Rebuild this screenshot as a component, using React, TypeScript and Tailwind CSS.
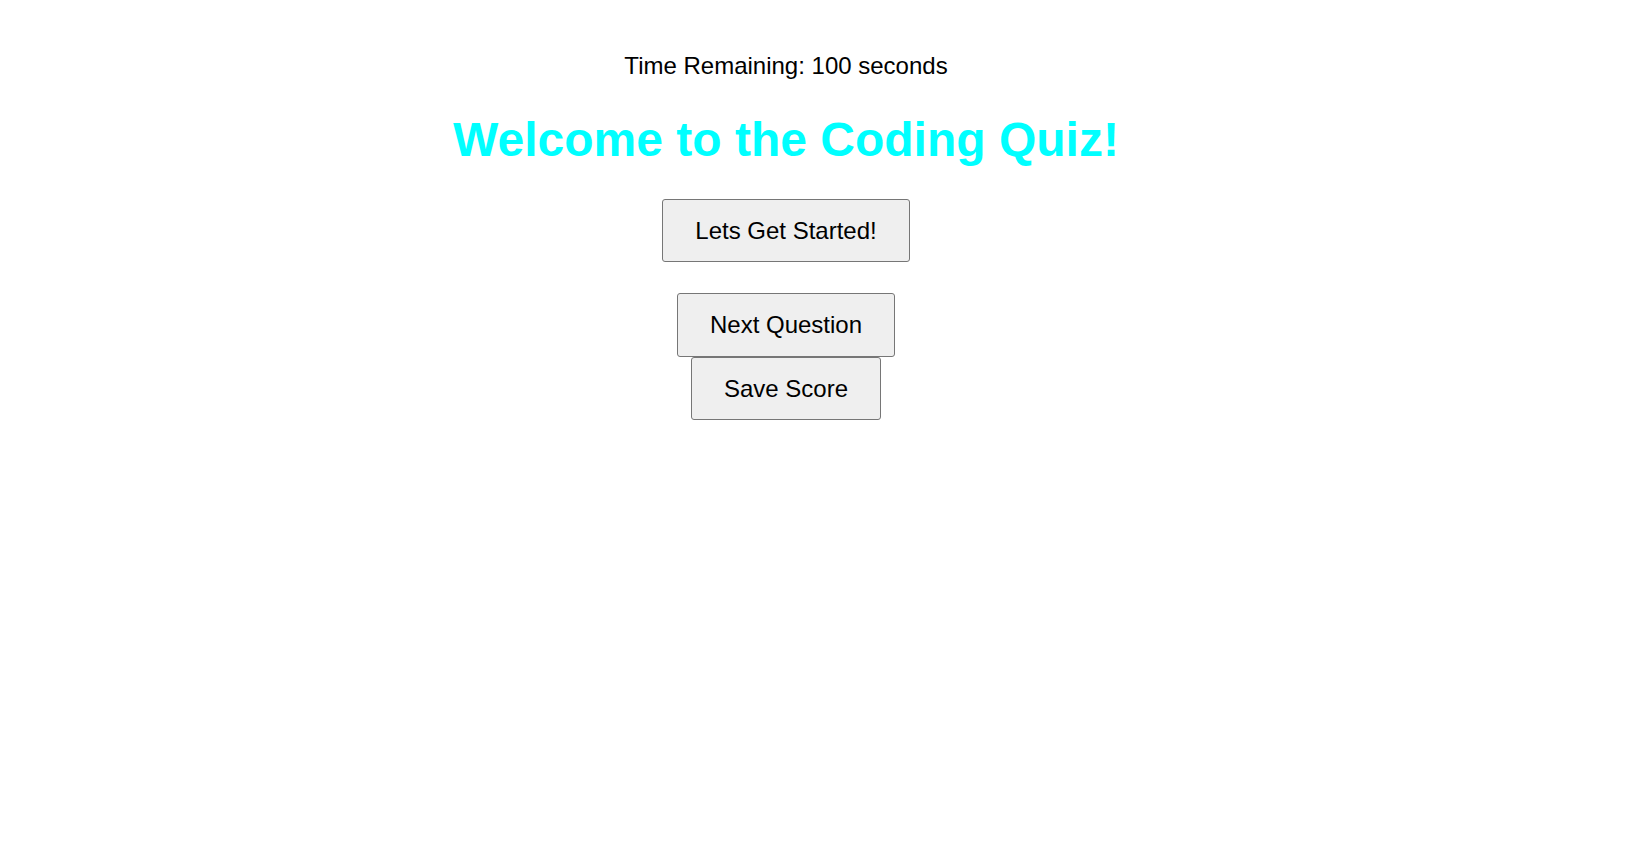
export default function App() {
  const btn =
    "block bg-[#efefef] border border-[#767676] rounded-[3px] px-[32px] py-[17px] text-[24px] leading-[1.149] text-black";
  return (
    <div
      className="w-[1572px] flex flex-col items-center pt-[52px] bg-white min-h-[850px]"
      style={{ fontFamily: '"Liberation Sans", Arial, sans-serif' }}
    >
      <p className="text-[24px] leading-[1.149] text-black">Time Remaining: 100 seconds</p>
      <h1 className="mt-[32px] mb-[32px] text-[48px] leading-[1.149] font-bold text-[#00ffff]">
        Welcome to the Coding Quiz!
      </h1>
      <button className={btn}>Lets Get Started!</button>
      <div className="mt-[31px] flex flex-col items-center">
        <button className={btn}>Next Question</button>
        <button className={btn}>Save Score</button>
      </div>
    </div>
  );
}
